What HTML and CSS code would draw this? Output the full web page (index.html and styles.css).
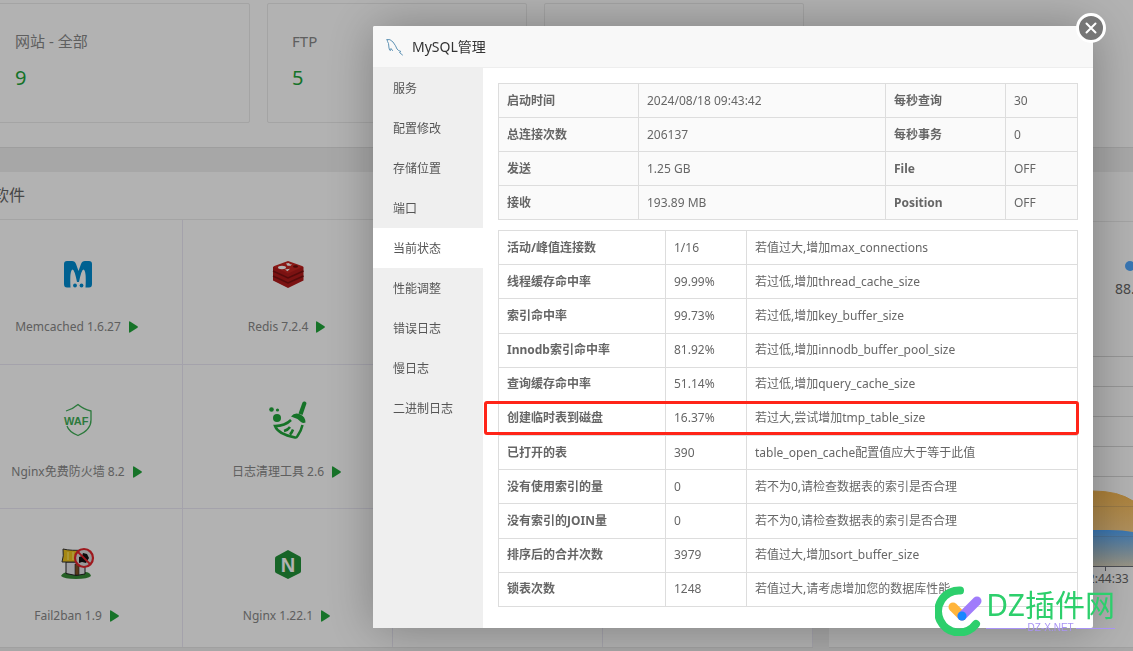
FILE: index.html
```html
<!DOCTYPE html>
<html lang="zh-CN">
<head>
<meta charset="utf-8">
<title>MySQL管理</title>
<link rel="stylesheet" href="styles.css">
</head>
<body>
<svg width="0" height="0" class="defs" aria-hidden="true">
  <symbol id="play" viewBox="0 0 9 12"><path d="M0 1.2Q0 0 1 .5L8.500 5.300Q9.200 6 8.500 6.700L1 11.500Q0 12 0 10.800Z" fill="#20a53a"/></symbol>
</svg>
<main class="page">
  <section class="overview">
    <article class="card"><h3>网站 - 全部</h3><a href="#">9</a></article>
    <article class="card"><h3>FTP</h3><a href="#">5</a></article>
    <article class="card"></article>
  </section>
  <div class="panels">
    <section class="panel soft">
      <h2>软件</h2>
      <div class="soft-grid">
        <div class="app">
          <svg width="48" height="48" viewBox="0 0 48 48"><path d="M13 10h5q3 0 4 3l2.500 7 2.500-7q1-3 4-3h4q3 0 3 3v20q0 3.500-3 3.500h-3.500q1-17-2-18-2 0-4.500 12.500h-2q-2.500-12.500-4.500-12.500-3 1-2 18H13q-3 0-3-3.500V13q0-3 3-3Z" fill="#008cd0"/><circle cx="21" cy="34.500" r="1.900" fill="#008cd0"/><circle cx="27.500" cy="34.500" r="1.900" fill="#008cd0"/></svg>
          <p>Memcached 1.6.27 <svg class="play"><use href="#play"/></svg></p>
        </div>
        <div class="app">
          <svg width="48" height="48" viewBox="0 0 48 48"><path d="M9 16v13.500l15 7.500 15.500-7.500V16Z" fill="#b01a1a"/><path d="m9 20 15 7 15.500-7M9 25l15 7 15.500-7" fill="none" stroke="#7a1010" stroke-width="1.500"/><path d="M9 15.500 24 10l15.500 5.500L24 22.500Z" fill="#c42420"/><ellipse cx="18" cy="16.500" rx="4" ry="1.700" fill="#fff"/><path d="m22 12.500 3-.5 1 1.200 2 .3-1.500 1.200-3 .1Zm-1 6 5-.8-2.500 2.500Z" fill="#fff"/><ellipse cx="31.500" cy="15.500" rx="2.500" ry="1.200" fill="#6d0d0d"/></svg>
          <p>Redis 7.2.4 <svg class="play"><use href="#play"/></svg></p>
        </div>
        <div class="app"></div><div class="app"></div>
        <div class="app">
          <svg width="48" height="48" viewBox="0 0 48 48"><path d="M12 15Q19 13 24 8.500 29 13 37 15V24q0 10-13 15.500Q15 36 13 30" fill="none" stroke="#3fae57" stroke-width="1.300"/><text x="10" y="28.500" class="waf">WAF</text></svg>
          <p>Nginx免费防火墙 8.2 <svg class="play"><use href="#play"/></svg></p>
        </div>
        <div class="app">
          <svg width="48" height="48" viewBox="0 0 48 48"><g fill="#20a53a"><path d="m34.500 17.500 4-11q.8-1.500 2.500-1 1.800.8 1.400 2.300L38.500 19Z"/><path d="M27 20.500q3.500-4.500 9-2.300 5.500 2.500 5.500 8.300-2.500 1-4.500-.5-4-4-10-5.500Z"/><circle cx="7.500" cy="13.500" r="2.300"/><circle cx="13.500" cy="14" r="1.600"/><circle cx="13" cy="22" r="4"/></g><path d="M27 24q-6 6-16 6 3 8 20 11.500 1.500.5 2.500-1.500 4-6 5-11M20 35q4-1 6-4M26 38.500q2-2 3-5" fill="none" stroke="#20a53a" stroke-width="2.500"/></svg>
          <p>日志清理工具 2.6 <svg class="play"><use href="#play"/></svg></p>
        </div>
        <div class="app"></div><div class="app"></div>
        <div class="app">
          <svg width="48" height="48" viewBox="0 0 48 48"><path d="M7 36q2-4 8-4h16q5 0 6 4-3 3-15 3T7 36Z" fill="#368a36"/><path d="M12 22h19v12l-9 1.500-10-2Z" fill="#e5e5ea" stroke="#222"/><path d="M21 24h4v11h-4Z" fill="#7d5025" stroke="#222" stroke-width=".6"/><path d="M9 9q8 2 22 1v12H8q2-6 1-13Z" fill="#edc21c" stroke="#333"/><path d="M14 12v8m5-8v8" stroke="#fff07a"/><circle cx="30" cy="18" r="9" fill="#ddd" stroke="#e3252c" stroke-width="2.200"/><path d="m25 17 3-1 1-3 4 1 2 4-3 5-4-1-3 1Z" fill="#111"/><path d="m24 12 12.500 12.500" stroke="#e3252c" stroke-width="1.800"/></svg>
          <p>Fail2ban 1.9 <svg class="play"><use href="#play"/></svg></p>
        </div>
        <div class="app">
          <svg width="48" height="48" viewBox="0 0 48 48"><path d="m24 10 12 6.500q1 .7 1 2V31q0 1.500-1 2l-12 6-12-6q-1-.5-1-2V18.500q0-1.300 1-2Z" fill="#229139"/><text x="24" y="31.500" text-anchor="middle" class="nginx">N</text></svg>
          <p>Nginx 1.22.1 <svg class="play"><use href="#play"/></svg></p>
        </div>
        <div class="app"></div><div class="app"></div>
      </div>
    </section>
    <section class="panel traffic">
      <h2></h2>
      <div class="legend"><i></i><span>88.</span></div>
      <svg class="chart" width="304" height="216" viewBox="0 0 304 216">
        <defs>
          <linearGradient id="up" x2="0" y2="1"><stop stop-color="#f7b851"/><stop offset="1" stop-color="#f7b851" stop-opacity=".45"/></linearGradient>
          <linearGradient id="down" x2="0" y2="1"><stop stop-color="#52a9ff"/><stop offset="1" stop-color="#52a9ff" stop-opacity=".2"/></linearGradient>
        </defs>
        <path d="M0 .5h304M0 30.500h304M0 60.500h304M0 90.500h304M0 120.500h304M0 150.500h304M0 180.500h304" stroke="#d8d8d8"/>
        <path d="M200 135h64q25 0 40 10v65H200Z" fill="url(#up)"/>
        <path d="M200 174h80q14 0 24 2v34H200Z" fill="url(#down)"/>
        <path d="M264 135q25 0 40 10" fill="none" stroke="#f7b851"/>
        <path d="M0 150.500h304M0 180.500h304" stroke="#777" stroke-opacity=".2"/>
        <path d="M0 210.500h304M276.500 210v5" stroke="#6e7079"/>
      </svg>
      <time>12:44:33</time>
    </section>
  </div>
</main>
<div class="shade"></div>

<section class="dialog" role="dialog" aria-label="MySQL管理">
  <header>
    <svg width="18" height="18" viewBox="0 0 18 18" fill="none" stroke="#5f93b5" stroke-linecap="round"><path d="M1 1.500Q4 .5 7 4q3 4 4 7 1.500 2 4 2.500l-1.500 1 3 2.500M1 1.500Q1.500 4 2.500 5.500L3 10q.5 3 1.500 2.500l.5-2 1.500 2"/></svg>
    <h1>MySQL管理</h1>
  </header>
  <button class="close" aria-label="关闭"><svg width="12" height="12" viewBox="0 0 12 12"><path d="m1.500 1.500 9 9m0-9-9 9" stroke="#fff" stroke-width="2" stroke-linecap="round"/></svg></button>
  <div class="body">
    <nav>
      <a href="#">服务</a><a href="#">配置修改</a><a href="#">存储位置</a><a href="#">端口</a><a href="#" class="on">当前状态</a><a href="#">性能调整</a><a href="#">错误日志</a><a href="#">慢日志</a><a href="#">二进制日志</a>
    </nav>
    <div class="content">
      <table class="summary">
        <colgroup><col class="s1"><col><col class="s3"><col class="s4"></colgroup>
        <tr><th>启动时间</th><td>2024/08/18 09:43:42</td><th>每秒查询</th><td>30</td></tr>
        <tr><th>总连接次数</th><td>206137</td><th>每秒事务</th><td>0</td></tr>
        <tr><th>发送</th><td>1.25 GB</td><th>File</th><td>OFF</td></tr>
        <tr><th>接收</th><td>193.89 MB</td><th>Position</th><td>OFF</td></tr>
      </table>
      <table class="status">
        <colgroup><col class="t1"><col class="t2"><col></colgroup>
        <tr><th>活动/峰值连接数</th><td>1/16</td><td>若值过大,增加max_connections</td></tr>
        <tr><th>线程缓存命中率</th><td>99.99%</td><td>若过低,增加thread_cache_size</td></tr>
        <tr><th>索引命中率</th><td>99.73%</td><td>若过低,增加key_buffer_size</td></tr>
        <tr><th>Innodb索引命中率</th><td>81.92%</td><td>若过低,增加innodb_buffer_pool_size</td></tr>
        <tr><th>查询缓存命中率</th><td>51.14%</td><td>若过低,增加query_cache_size</td></tr>
        <tr class="marked"><th>创建临时表到磁盘</th><td>16.37%</td><td>若过大,尝试增加tmp_table_size</td></tr>
        <tr><th>已打开的表</th><td>390</td><td>table_open_cache配置值应大于等于此值</td></tr>
        <tr><th>没有使用索引的量</th><td>0</td><td>若不为0,请检查数据表的索引是否合理</td></tr>
        <tr><th>没有索引的JOIN量</th><td>0</td><td>若不为0,请检查数据表的索引是否合理</td></tr>
        <tr><th>排序后的合并次数</th><td>3979</td><td>若值过大,增加sort_buffer_size</td></tr>
        <tr><th>锁表次数</th><td>1248</td><td>若值过大,请考虑增加您的数据库性能</td></tr>
      </table>
    </div>
  </div>
</section>

<div class="watermark">
  <svg width="48" height="50" viewBox="0 0 48 50" fill="none" stroke-linecap="round"><path d="M25 4.500A21 21 0 1 0 41 38" stroke="#2dcf6c" stroke-width="8"/><path d="m18 21 9 9" stroke="#ffb53b" stroke-width="9"/><path d="M42 15 27 30" stroke="#a07cfb" stroke-width="9"/><circle cx="27" cy="30" r="4.500" fill="#1786ff"/></svg>
  <div><strong>DZ插件网</strong><small>DZ-X.NET</small></div>
</div>
</body>
</html>
```
FILE: styles.css
```css
* { box-sizing: border-box; margin: 0; padding: 0; }
html, body { height: 100%; overflow: hidden; }
body {
  font: 12px/18px "Noto Sans", "Noto Sans CJK SC", sans-serif;
  color: #666;
  background: #f0f0f0;
}
a { color: inherit; text-decoration: none; }
h1, h2, h3 { font-weight: 400; }
.defs { position: absolute; }

.page { height: 100vh; margin-left: -27px; overflow: hidden; }
.overview {
  display: grid;
  grid-template-columns: repeat(3, 260px);
  gap: 17px;
  padding: 3px 17px 24px;
  background: #fff;
  border-bottom: 1px solid #e2e2e2;
}
.card { height: 120px; padding: 25px 24px; border: 1px solid #ebebeb; border-radius: 2px; }
.card h3 { font-size: 15px; line-height: 24px; color: #888; }
.card a { display: block; margin-top: 12px; font-size: 20px; line-height: 26px; color: #20a53a; }

.panels { display: flex; gap: 16px; margin-top: 24px; }
.panel { height: 476px; background: #fff; overflow: hidden; border-bottom: 1px solid #e5e5e5; }
.panel h2 { height: 48px; padding-left: 20px; font-size: 16px; line-height: 46px; border-bottom: 1px solid #ebebeb; }
.soft { flex: none; width: 840px; }
.soft-grid { display: grid; grid-template-columns: repeat(4, 1fr); grid-template-rows: 145px 144px 144px; }
.app { padding-top: 31px; text-align: center; border: solid #ebe9f5; border-width: 0 1px 1px 0; }
.app > svg { display: block; margin: 0 auto 19px; }
.app p { display: flex; justify-content: center; align-items: center; gap: 8px; padding-right: 2px; color: #888; }
.play { width: 9px; height: 12px; }
.waf { font: bold 11px "Liberation Sans", sans-serif; fill: #3fae57; }
.nginx { font: bold 20px "Liberation Sans", sans-serif; fill: #fff; }

.traffic { flex: 1; }
.traffic h2 { height: 50px; }
.legend { width: 304px; height: 134px; padding: 39px 0 0 286px; font-size: 14px; line-height: 20px; }
.legend i { display: block; width: 10px; height: 10px; margin: 0 0 8px 10px; border-radius: 50%; background: #52a9ff; }
.chart { display: block; }
.traffic time { display: block; width: 304px; padding-left: 252px; line-height: 14px; }

.shade { position: fixed; inset: 0; background: rgba(0, 0, 0, .3); }

.dialog {
  position: fixed;
  top: 26px;
  right: 40px;
  width: 720px;
  background: #fff;
  border-radius: 2px;
  box-shadow: 1px 1px 50px rgba(0, 0, 0, .3);
}
.dialog header {
  display: flex;
  align-items: center;
  gap: 8px;
  height: 42px;
  padding-left: 13px;
  background: #f8f8f8;
  border-bottom: 1px solid #eee;
  border-radius: 2px 2px 0 0;
}
.dialog h1 { font-size: 14px; line-height: 20px; color: #333; }
.close {
  position: absolute;
  top: -13px;
  right: -13px;
  display: grid;
  place-items: center;
  width: 30px;
  height: 30px;
  border: 3px solid #fff;
  border-radius: 50%;
  background: #767676;
}
.body { display: flex; }
.body nav { flex: none; width: 110px; background: #efefef; }
.body nav a { display: block; height: 40px; padding: 2px 0 0 20px; line-height: 38px; color: #555; }
.body nav .on { background: #fff; }
.content { flex: 1; padding: 15px 15px 21px; }
table { width: 100%; table-layout: fixed; border-collapse: collapse; }
th, td { height: 34px; padding: 0 8px; text-align: left; border: 1px solid #ddd; white-space: nowrap; }
.summary { margin-bottom: 10px; background: #fafafa; }
.status { height: 377px; }
.s1 { width: 140px; }
.s3 { width: 120px; }
.s4 { width: 72px; }
.t1 { width: 167px; }
.t2 { width: 81px; }
.marked { position: relative; }
.marked th::after {
  content: "";
  position: absolute;
  inset: 0 -1px 1px -15px;
  border: 3px solid #ff2418;
  border-radius: 3px;
}

.watermark { position: fixed; right: 18px; bottom: 15px; display: flex; gap: 3px; }
.watermark strong { display: block; font-size: 30px; font-weight: 400; line-height: 38px; color: #2dcf6c; }
.watermark small { display: flex; align-items: center; gap: 2px; font: 10px/8px "Liberation Sans", sans-serif; color: #a993f5; }
.watermark small::before, .watermark small::after { content: ""; flex: 1; height: 1px; background: #a993f5; }
```
